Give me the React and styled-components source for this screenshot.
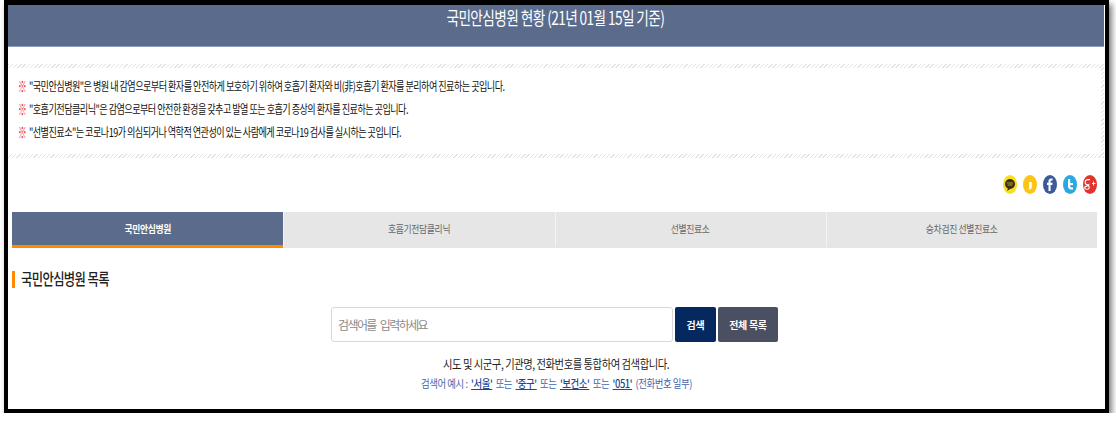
import React from "react";
import styled, { createGlobalStyle } from "styled-components";

const GlobalStyle = createGlobalStyle`
  html, body { margin: 0; padding: 0; background: #fff; }
  body { font-family: "Noto Sans CJK KR", "Noto Sans", sans-serif; }
`;

const Frame = styled.div`
  box-sizing: border-box;
  width: 1105px;
  height: 413px;
  margin-left: 4px;
  border: solid #000;
  border-width: 5px 4px 4px 4px;
  box-shadow: 3px 4px 6px rgba(0, 0, 0, 0.5);
  background: #fff;
  overflow: hidden;
`;

// the original page is squeezed sideways, so text is narrowed with a transform
const Squeezed = styled.span`
  display: inline-block;
  white-space: nowrap;
  transform: scaleX(${p => p.$x});
  transform-origin: ${p => p.$origin || "center"};
`;

const Header = styled.h1`
  box-sizing: border-box;
  height: 42px;
  margin: 0 1px 0 0;
  padding-right: 2px;
  background: #5a6b8c;
  border-bottom: 1px solid #8f9db8;
  color: #fff;
  font-size: 18px;
  font-weight: 400;
  line-height: 24px;
  letter-spacing: -0.8px;
  text-align: center;
`;

const hatch = `repeating-linear-gradient(135deg, #e4e4e4 0, #e4e4e4 1px, #fff 1px, #fff 3px)`;

const Notice = styled.div`
  margin: 17px 1px 0 0;
  padding: 4px 3px 4px 0;
  background: ${hatch};
`;

const NoticeInner = styled.ul`
  list-style: none;
  margin: 0;
  padding: 6px 0 0 10px;
  height: 86px;
  box-sizing: border-box;
  background: #fff;
`;

const NoticeRow = styled.li`
  display: flex;
  align-items: center;
  gap: 4px;
  height: 23px;
  font-size: 12px;
  letter-spacing: -0.72px;
  color: #111;
`;

const Mark = styled.span`
  flex: none;
  width: 7px;
  color: #e8281e;
  font-size: 15px;
  font-weight: 900;
  letter-spacing: 0;
  line-height: 1;
`;

const Social = styled.div`
  display: flex;
  justify-content: flex-end;
  gap: 6px;
  margin-top: 17px;
  padding-right: 8px;
  height: 20px;
`;

const Tabs = styled.div`
  display: grid;
  grid-template-columns: repeat(4, 1fr);
  margin: 17px 8px 0 4px;
`;

const Tab = styled.div`
  height: 36px;
  box-sizing: border-box;
  display: flex;
  align-items: center;
  justify-content: center;
  font-size: 10.5px;
  letter-spacing: -0.4px;
  font-weight: ${p => (p.$active ? 700 : 400)};
  color: ${p => (p.$active ? "#fff" : "#666")};
  background: ${p => (p.$active ? "#5a6b8c" : "#e6e6e6")};
  border-bottom: 3px solid ${p => (p.$active ? "#ff8a00" : "#e6e6e6")};
  border-left: ${p => (p.$first ? "0" : "1px solid #f4f4f4")};
`;

const SectionTitle = styled.h2`
  display: flex;
  align-items: center;
  gap: 6px;
  margin: 20px 0 0 4px;
  height: 20px;
  font-size: 16px;
  font-weight: 500;
  letter-spacing: -0.8px;
  color: #222;
  &::before {
    content: "";
    flex: none;
    width: 3px;
    height: 17px;
    margin-top: 3px;
    background: #ff8a00;
  }
`;

const SearchRow = styled.form`
  display: flex;
  gap: 2px;
  margin: 19px 0 0 323px;
`;

const SearchInput = styled.input`
  box-sizing: border-box;
  width: 342px;
  height: 35px;
  padding: 0 6px;
  border: 1px solid #d8d8d8;
  border-radius: 3px;
  font-family: inherit;
  font-size: 12px;
  letter-spacing: -1.6px;
  word-spacing: 3px;
  outline: none;
  &::placeholder { color: #8a8a8a; opacity: 1; }
`;

const Button = styled.button`
  box-sizing: border-box;
  width: ${p => p.$w}px;
  height: 35px;
  padding: 0;
  border: 0;
  border-radius: 2px;
  background: ${p => p.$bg};
  color: #fff;
  font-family: inherit;
  font-size: 10px;
  font-weight: 700;
  letter-spacing: -0.3px;
`;

const Help = styled.p`
  margin: 13px 0 0;
  height: 18px;
  text-align: center;
  font-size: 12.5px;
  line-height: 18px;
  letter-spacing: -0.55px;
  color: #222;
`;

const Example = styled.p`
  margin: 2px 0 0;
  text-align: center;
  font-size: 11px;
  line-height: 16px;
  letter-spacing: -0.5px;
  color: #3f66ad;
`;

const Keyword = styled.a`
  color: #1c4a94;
  font-weight: 500;
  text-decoration: underline;
  margin: 0 2px;
`;

const Icon = ({ bg, children }) => (
  <svg width="14" height="19" viewBox="0 0 14 19">
    <ellipse cx="7" cy="9.5" rx="7" ry="9.5" fill={bg} />
    {children}
  </svg>
);

const notices = [
  '"국민안심병원"은 병원 내 감염으로부터 환자를 안전하게 보호하기 위하여 호흡기 환자와 비(非)호흡기 환자를 분리하여 진료하는 곳입니다.',
  '"호흡기전담클리닉"은 감염으로부터 안전한 환경을 갖추고 발열 또는 호흡기 증상의 환자를 진료하는 곳입니다.',
  '"선별진료소"는 코로나19가 의심되거나 역학적 연관성이 있는 사람에게 코로나19 검사를 실시하는 곳입니다.',
];

const tabs = ["국민안심병원", "호흡기전담클리닉", "선별진료소", "승차검진 선별진료소"];

export default function App() {
  return (
    <Frame>
      <GlobalStyle />
      <Header><Squeezed $x={0.76}>국민안심병원 현황 (21년 01월 15일 기준)</Squeezed></Header>
      <Notice>
        <NoticeInner>
          {notices.map(text => (
            <NoticeRow key={text}>
              <Mark><Squeezed $x={0.58} $origin="left">※</Squeezed></Mark>
              <Squeezed $x={0.76} $origin="left">{text}</Squeezed>
            </NoticeRow>
          ))}
        </NoticeInner>
      </Notice>
      <Social>
        <Icon bg="#f7e01c">
          <ellipse cx="7" cy="9" rx="5" ry="5" fill="#3a2e1c" />
          <path d="M5 13l-1 3 4-2.500z" fill="#3a2e1c" />
          <path d="M4 8h6M4.500 10h5" stroke="#b9a52a" strokeWidth="1" />
        </Icon>
        <Icon bg="#fcc419">
          <path d="M6 7h2.800v4.400c0 1.800-1 2.800-3 3.200v-1.400c.7-.2 1-.6 1.100-1.200H6z" fill="#fff" />
        </Icon>
        <Icon bg="#3b5a9b">
          <path d="M7.600 16V10h1.700l.3-2.200h-2V6.500c0-.7.2-1 1-1h1V3.600H8.200C6.500 3.600 5.500 4.600 5.500 6.300v1.500H4V10h1.500v6z" fill="#fff" />
        </Icon>
        <Icon bg="#2aa9e0">
          <path d="M5 4v7c0 2 1.200 3.500 3.300 3.500H10v-2H8.400c-.8 0-1.200-.5-1.200-1.400V10H10V8H7.200V4z" fill="#fff" />
        </Icon>
        <Icon bg="#e0342f">
          <path d="M7 4.600H4.800C3.200 4.600 2.200 5.800 2.200 7.300s1 2.600 2.500 2.600c.5 0 .8-.1 1-.2l-.4 1c1.500 1 1.400 3.400-1.200 3.500-1.400.1-2.400-.5-2.400-1.400 0-1.200 1.300-1.700 2.800-1.700" stroke="#fff" strokeWidth="1.100" fill="none" />
          <path d="M9 8h1V6.500h1V8h1.500v1H11v1.500h-1V9H9z" fill="#fff" />
        </Icon>
      </Social>
      <Tabs>
        {tabs.map((name, i) => (
          <Tab key={name} $active={i === 0} $first={i === 0}>
            <Squeezed $x={0.84}>{name}</Squeezed>
          </Tab>
        ))}
      </Tabs>
      <SectionTitle>
        <Squeezed $x={0.77} $origin="left">국민안심병원 목록</Squeezed>
      </SectionTitle>
      <SearchRow onSubmit={e => e.preventDefault()}>
        <SearchInput placeholder="검색어를 입력하세요" />
        <Button $w={41} $bg="#05285e">검색</Button>
        <Button $w={60} $bg="#4a4f62">전체 목록</Button>
      </SearchRow>
      <Help><Squeezed $x={0.825}>시도 및 시군구, 기관명, 전화번호를 통합하여 검색합니다.</Squeezed></Help>
      <Example>
        <Squeezed $x={0.855}>
          검색어 예시 : <Keyword>'서울'</Keyword> 또는 <Keyword>'중구'</Keyword> 또는 <Keyword>'보건소'</Keyword> 또는 <Keyword>'051'</Keyword> (전화번호 일부)
        </Squeezed>
      </Example>
    </Frame>
  );
}
